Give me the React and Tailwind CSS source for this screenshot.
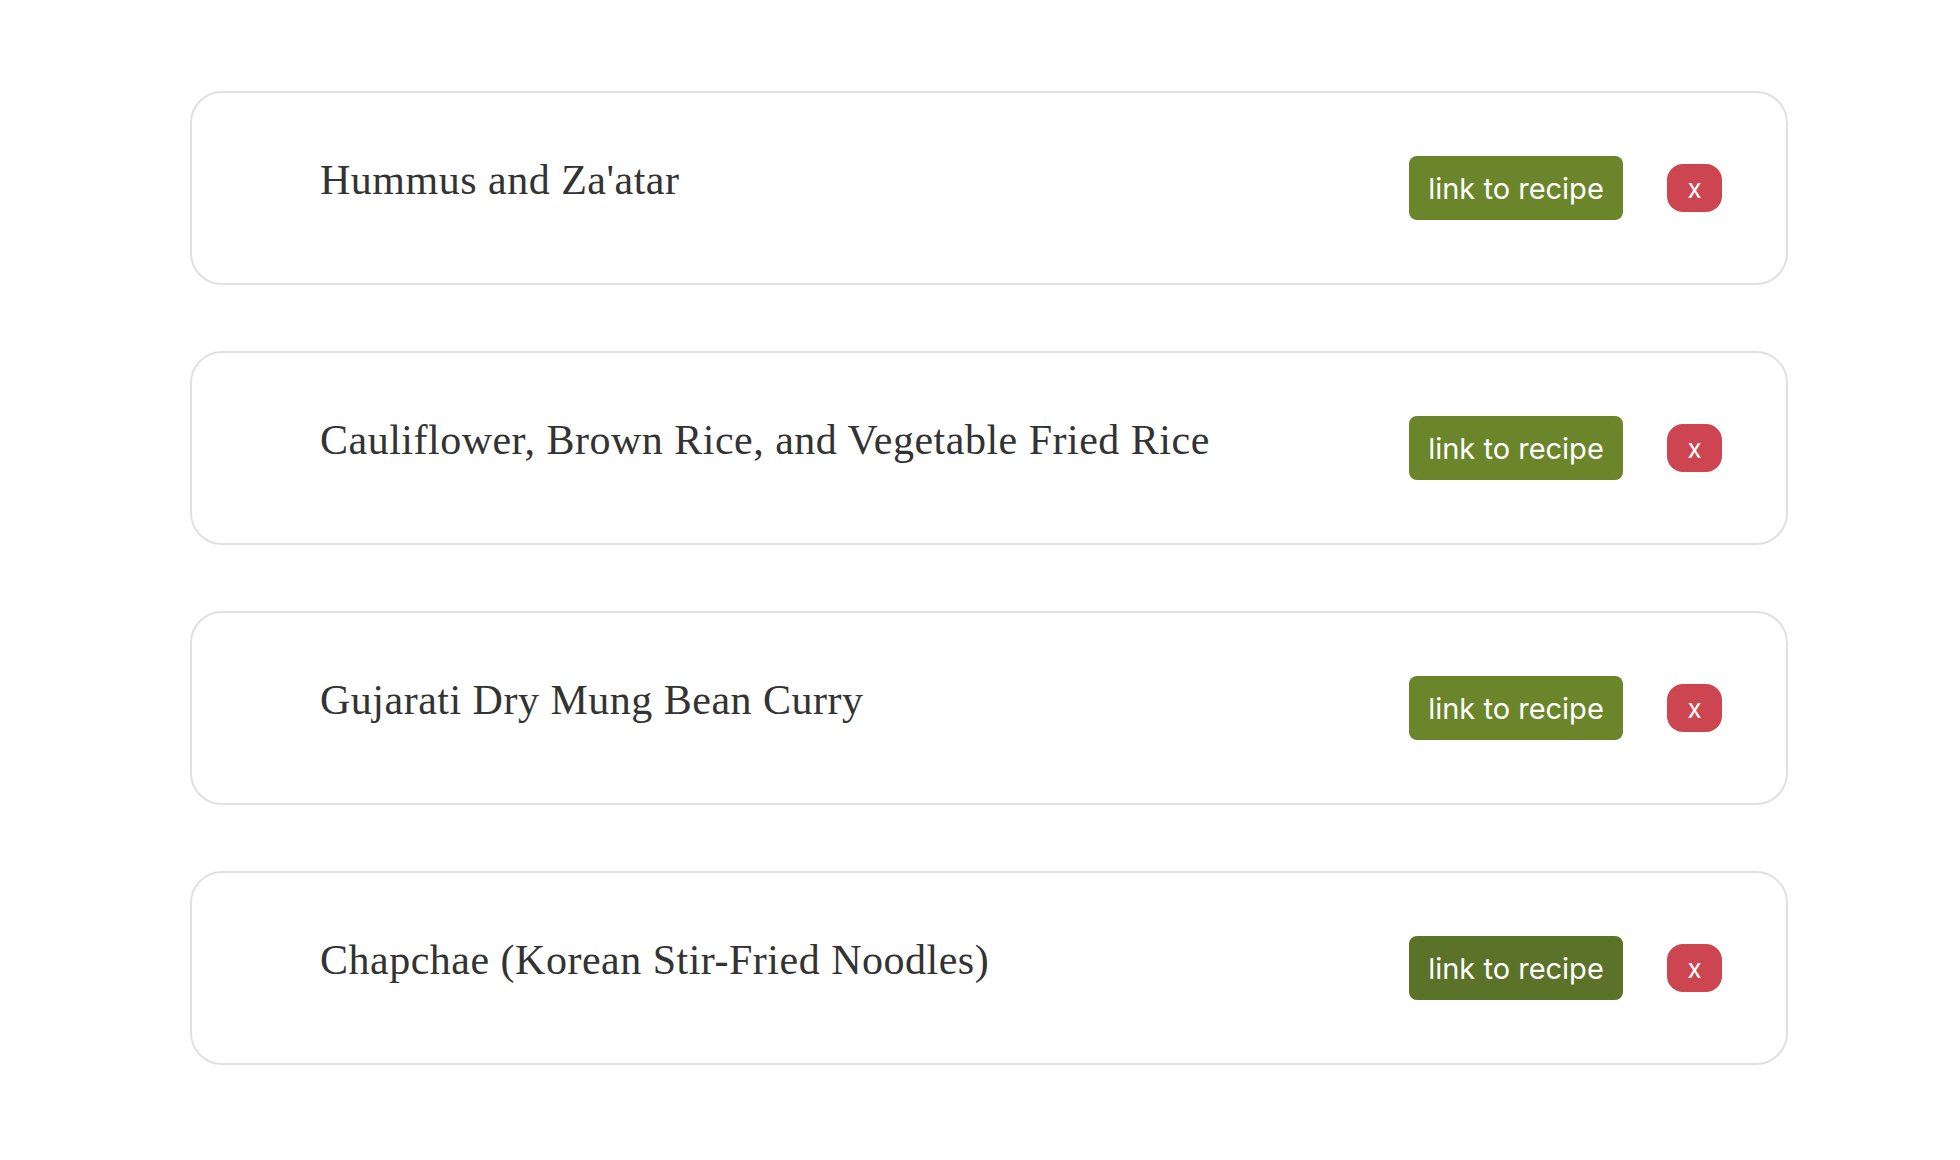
import React from "react";

const items = [
  { title: "Hummus and Za'atar", dark: false },
  { title: "Cauliflower, Brown Rice, and Vegetable Fried Rice", dark: false },
  { title: "Gujarati Dry Mung Bean Curry", dark: false },
  { title: "Chapchae (Korean Stir-Fried Noodles)", dark: true },
];

export default function App() {
  return (
    <div className="w-[1960px] h-[1160px] bg-white pt-[91px] pl-[190px]">
      <div className="flex flex-col gap-[66px]">
        {items.map((it) => (
          <div
            key={it.title}
            className="w-[1598px] h-[194px] border-2 border-[#e0e0e0] rounded-[32px] flex items-center pl-[128px] pr-[64px]"
          >
            <div
              className="flex-1 -mt-[16px] text-[42px] leading-[48px] tracking-[0.5px] text-[#333333]"
              style={{ fontFamily: '"Liberation Serif", serif' }}
            >
              {it.title}
            </div>
            <button
              className={
                "w-[214px] h-[64px] rounded-[8px] text-white text-[29px] pt-[2px] flex items-center justify-center " +
                (it.dark ? "bg-[#5b7328]" : "bg-[#6b852b]")
              }
              style={{ fontFamily: "Inter, sans-serif" }}
            >
              link to recipe
            </button>
            <button
              className="ml-[44px] w-[55px] h-[48px] rounded-[16px] bg-[#cd4550] text-white text-[26px] flex items-center justify-center"
              style={{ fontFamily: "Inter, sans-serif" }}
            >
              x
            </button>
          </div>
        ))}
      </div>
    </div>
  );
}
